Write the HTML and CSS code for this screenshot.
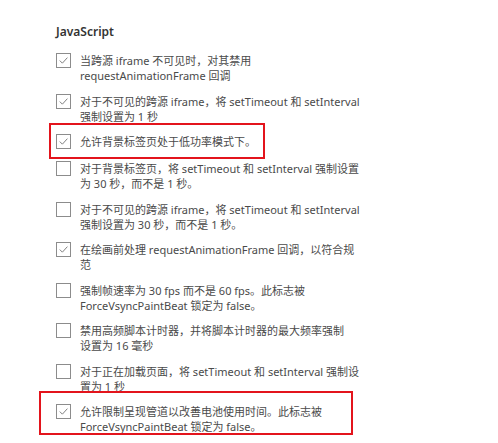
FILE: index.html
```html
<!DOCTYPE html>
<html lang="zh-CN">
<head>
<meta charset="utf-8">
<title>JavaScript</title>
<link rel="stylesheet" href="styles.css">
</head>
<body>
<div class="panel">
  <h2 class="title">JavaScript</h2>
  <ul class="list">
    <li class="item">
      <span class="box checked"><svg viewBox="0 0 15 15"><path d="M3.2 7.6 L6.2 10.6 L12 4.2"/></svg></span>
      <span class="label">当跨源 iframe 不可见时，对其禁用<br>requestAnimationFrame 回调</span>
    </li>
    <li class="item">
      <span class="box checked"><svg viewBox="0 0 15 15"><path d="M3.2 7.6 L6.2 10.6 L12 4.2"/></svg></span>
      <span class="label">对于不可见的跨源 iframe，将 setTimeout 和 setInterval<br>强制设置为 1 秒</span>
    </li>
    <li class="item single mark-a">
      <span class="box checked"><svg viewBox="0 0 15 15"><path d="M3.2 7.6 L6.2 10.6 L12 4.2"/></svg></span>
      <span class="label">允许背景标签页处于低功率模式下。</span>
    </li>
    <li class="item">
      <span class="box"></span>
      <span class="label">对于背景标签页，将 setTimeout 和 setInterval 强制设置<br>为 30 秒，而不是 1 秒。</span>
    </li>
    <li class="item">
      <span class="box"></span>
      <span class="label">对于不可见的跨源 iframe，将 setTimeout 和 setInterval<br>强制设置为 30 秒，而不是 1 秒。</span>
    </li>
    <li class="item">
      <span class="box checked"><svg viewBox="0 0 15 15"><path d="M3.2 7.6 L6.2 10.6 L12 4.2"/></svg></span>
      <span class="label">在绘画前处理 requestAnimationFrame 回调，以符合规<br>范</span>
    </li>
    <li class="item">
      <span class="box"></span>
      <span class="label">强制帧速率为 30 fps 而不是 60 fps。此标志被<br>ForceVsyncPaintBeat 锁定为 false。</span>
    </li>
    <li class="item">
      <span class="box"></span>
      <span class="label">禁用高频脚本计时器，并将脚本计时器的最大频率强制<br>设置为 16 毫秒</span>
    </li>
    <li class="item">
      <span class="box"></span>
      <span class="label">对于正在加载页面，将 setTimeout 和 setInterval 强制设<br>置为 1 秒</span>
    </li>
    <li class="item mark-b">
      <span class="box checked"><svg viewBox="0 0 15 15"><path d="M3.2 7.6 L6.2 10.6 L12 4.2"/></svg></span>
      <span class="label">允许限制呈现管道以改善电池使用时间。此标志被<br>ForceVsyncPaintBeat 锁定为 false。</span>
    </li>
    <li class="item">
      <span class="box"></span>
    </li>
  </ul>
</div>
</body>
</html>
```
FILE: styles.css
```css
html, body {
  margin: 0;
  padding: 0;
  background: #ffffff;
}
body {
  font-family: "Noto Sans", "Noto Sans CJK SC", sans-serif;
  color: #4a4a4a;
  overflow: hidden;
}
.panel {
  padding: 23px 0 0 56px;
}
.title {
  margin: 0 0 12px 0;
  font-size: 12px;
  line-height: 18px;
  font-weight: 600;
  color: #333333;
}
.list {
  list-style: none;
  margin: 0;
  padding: 0;
  display: flex;
  flex-direction: column;
  gap: 10.5px;
}
.item {
  display: flex;
  align-items: flex-start;
  gap: 9px;
  position: relative;
}
.single {
  min-height: 16.5px;
}
.box {
  flex: none;
  width: 15px;
  height: 15px;
  box-sizing: border-box;
  border: 1px solid #8c8c8c;
  background: #ffffff;
  display: flex;
}
.box svg {
  width: 13px;
  height: 13px;
}
.box path {
  fill: none;
  stroke: #7a7a7a;
  stroke-width: 1.1;
}
.label {
  font-size: 11px;
  line-height: 15px;
  white-space: nowrap;
}
.mark-a::after,
.mark-b::after {
  content: "";
  position: absolute;
  box-sizing: border-box;
  border: 2px solid #e3141c;
  pointer-events: none;
}
.mark-a::after {
  left: -7px;
  top: -11px;
  width: 216px;
  height: 36px;
}
.mark-b::after {
  left: -17px;
  top: -13px;
  width: 314px;
  height: 44px;
}
```
